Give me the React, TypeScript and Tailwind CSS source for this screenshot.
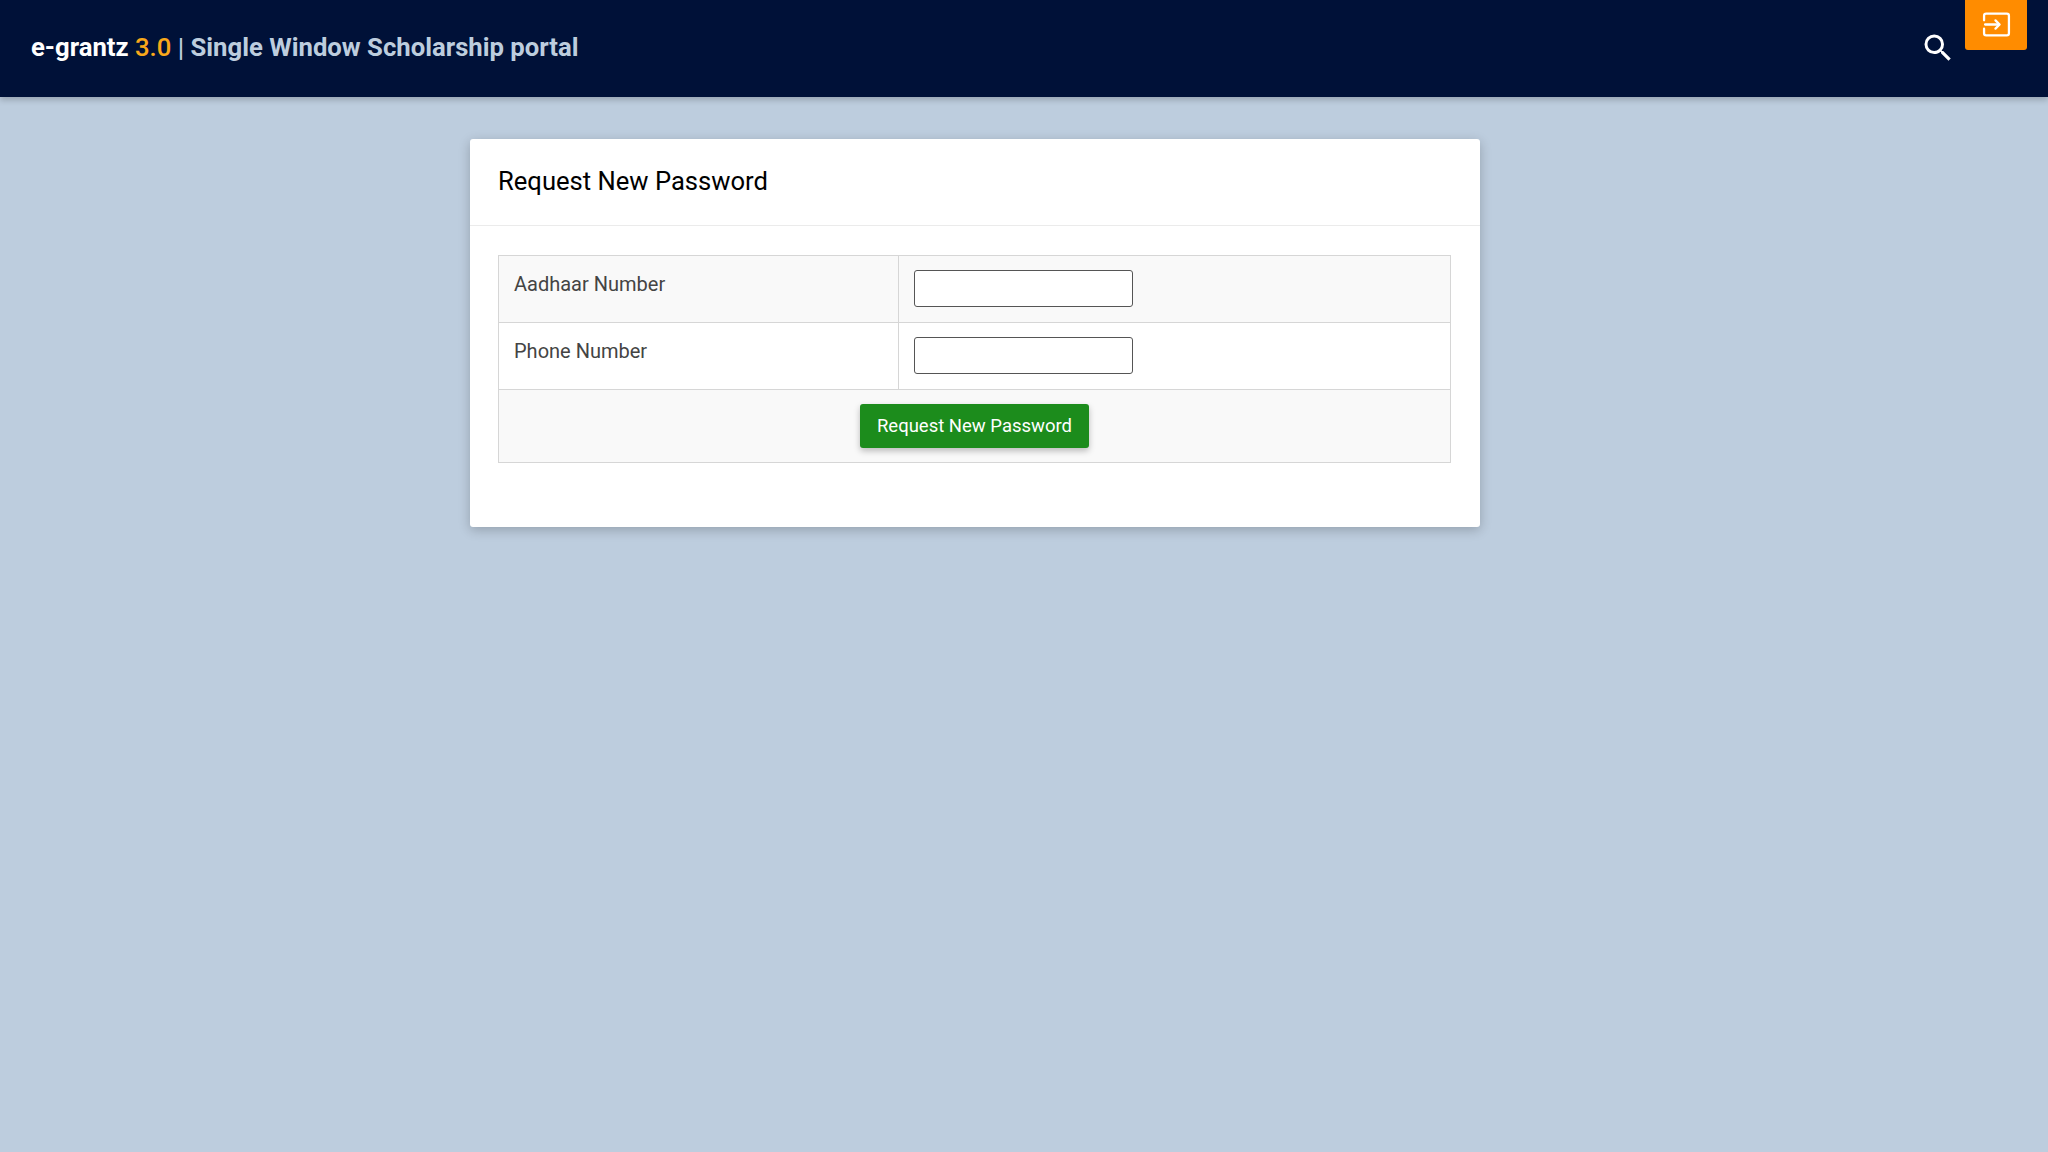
import { MdSearch } from "react-icons/md";

const App = () => {
  return (
    <div className="min-h-[1152px] bg-[#bdcdde] font-['Roboto',sans-serif]">
      <header className="h-[97px] bg-[#001138] flex items-start justify-between pl-[31px] pr-[21px] shadow-[0_3px_6px_rgba(0,0,0,0.2)]">
        <h1 className="mt-[30px] text-[25.7px] leading-[34px] font-bold text-white">
          e-grantz <span className="text-[#f9a81a] font-medium">3.0</span>{" "}
          <span className="text-[#bdcdde] font-medium">|</span>{" "}
          <span className="text-[#bdcdde]">Single Window Scholarship portal</span>
        </h1>
        <div className="flex items-start gap-[9px]">
          <MdSearch className="mt-[30px] text-white" size={36} />
          <button className="w-[62px] h-[50px] bg-[#ff8c00] rounded-b-[3px] flex items-center justify-center text-white pb-[1px]">
            <svg width="29" height="25" viewBox="0 0 28 24" fill="none" stroke="currentColor" strokeWidth="2.2" strokeLinecap="round" strokeLinejoin="round">
              <path d="M2 8V3.5C2 2.4 2.9 1.500 4 1.500h20c1.100 0 2 .9 2 2v17c0 1.100-.9 2-2 2H4c-1.100 0-2-.9-2-2V16" />
              <path d="M3 12h13" />
              <path d="M13 8l4 4-4 4" />
            </svg>
          </button>
        </div>
      </header>
      <main className="pt-[42px] pl-[470px]">
        <div className="w-[1010px] h-[388px] bg-white rounded-[3px] shadow-[0_3px_12px_rgba(0,0,0,0.22)]">
          <div className="h-[87px] border-b border-[#ebebeb] pl-[28px] pt-[26px]">
            <h2 className="text-[25.6px] leading-[32px] text-black">Request New Password</h2>
          </div>
          <div className="pt-[29px] pl-[28px]">
            <table className="w-[953px] border-collapse text-[20px] text-[#444]">
              <tbody>
                <tr className="h-[67px] bg-[#f9f9f9]">
                  <td className="w-[400px] px-[15px] pt-[13px] align-top border border-[#d6d6d6]">Aadhaar Number</td>
                  <td className="pl-[15px] pr-[14px] pb-[1px] align-middle border border-[#d6d6d6]">
                    <input className="block w-[219px] h-[37px] bg-white border border-[#555] rounded-[3px]" />
                  </td>
                </tr>
                <tr className="h-[67px] bg-white">
                  <td className="px-[15px] pt-[13px] align-top border border-[#d6d6d6]">Phone Number</td>
                  <td className="pl-[15px] pr-[14px] pb-[1px] align-middle border border-[#d6d6d6]">
                    <input className="block w-[219px] h-[37px] bg-white border border-[#555] rounded-[3px]" />
                  </td>
                </tr>
                <tr className="h-[73px] bg-[#f9f9f9]">
                  <td colSpan={2} className="text-center align-middle border border-[#d6d6d6]">
                    <button className="w-[229px] h-[44px] pt-[1px] bg-[#1c8c1c] text-white text-[18.5px] rounded-[3px] shadow-[0_3px_6px_rgba(0,0,0,0.25)]">
                      Request New Password
                    </button>
                  </td>
                </tr>
              </tbody>
            </table>
          </div>
        </div>
      </main>
    </div>
  );
};

export default App;
